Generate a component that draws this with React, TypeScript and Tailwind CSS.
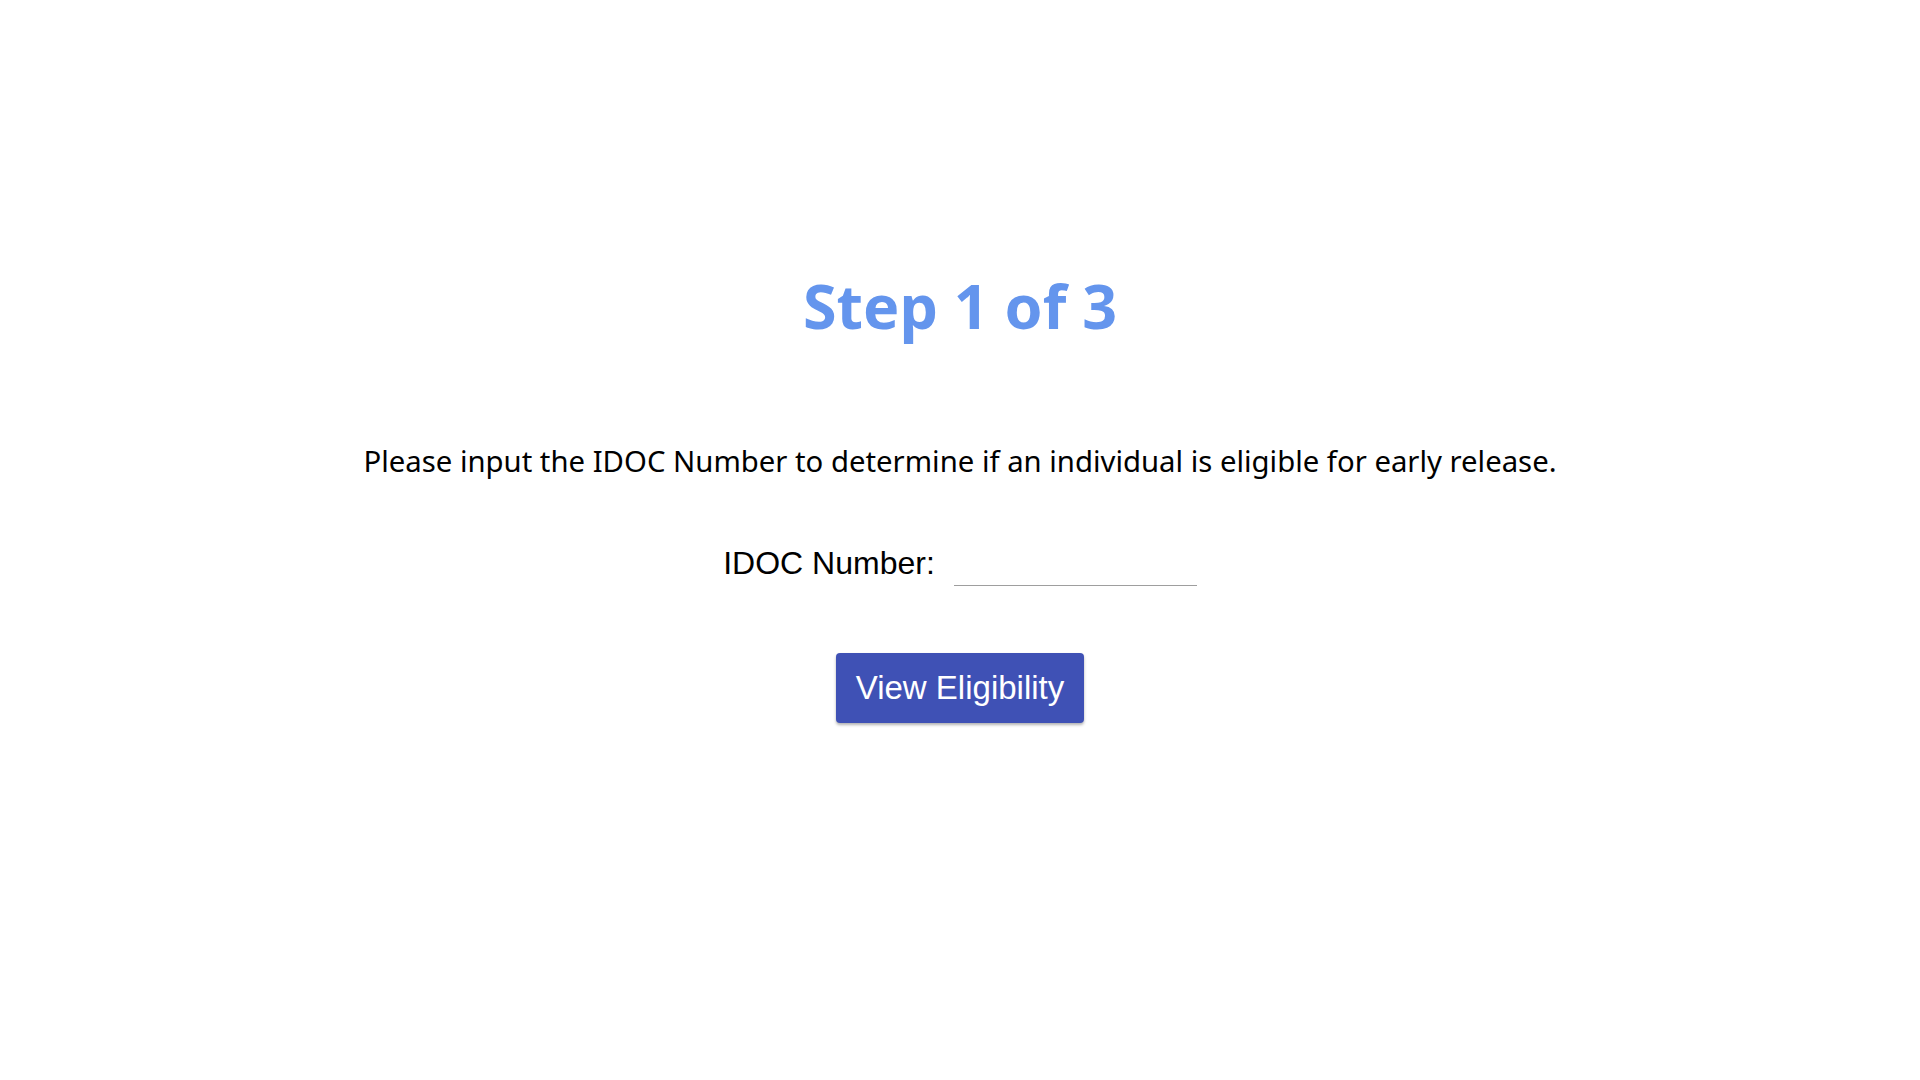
import React, { useState } from "react";

const App: React.FC = () => {
    const [idoc, setIdoc] = useState("");

    return (
        <div className="min-h-screen w-full bg-white flex flex-col items-center pt-[268px]">
            <h1 className="text-[61px] leading-[76px] font-bold text-[#6495ed] font-['Noto_Sans',sans-serif]">
                Step 1 of 3
            </h1>

            <p className="mt-[97px] text-[29.3px] leading-[40px] text-black font-['Noto_Sans',sans-serif]">
                Please input the IDOC Number to determine if an individual is eligible for early release.
            </p>

            <div className="mt-[62px] flex items-end gap-[19px] font-['Liberation_Sans',Arial,sans-serif]">
                <label htmlFor="idoc" className="text-[32px] leading-[40px] text-black">
                    IDOC Number:
                </label>
                <input
                    id="idoc"
                    value={idoc}
                    onChange={(e) => setIdoc(e.target.value)}
                    className="-mb-[3px] w-[243px] h-[36px] border-0 border-b border-[#9e9e9e] outline-none text-[24px]"
                />
            </div>

            <button
                className="mt-[70px] w-[248px] h-[70px] rounded-[4px] bg-[#3f51b5] text-white text-[33px] font-['Liberation_Sans',Arial,sans-serif] shadow-[0_2px_3px_rgba(0,0,0,0.3)]"
            >
                View Eligibility
            </button>
        </div>
    );
};

export default App;
